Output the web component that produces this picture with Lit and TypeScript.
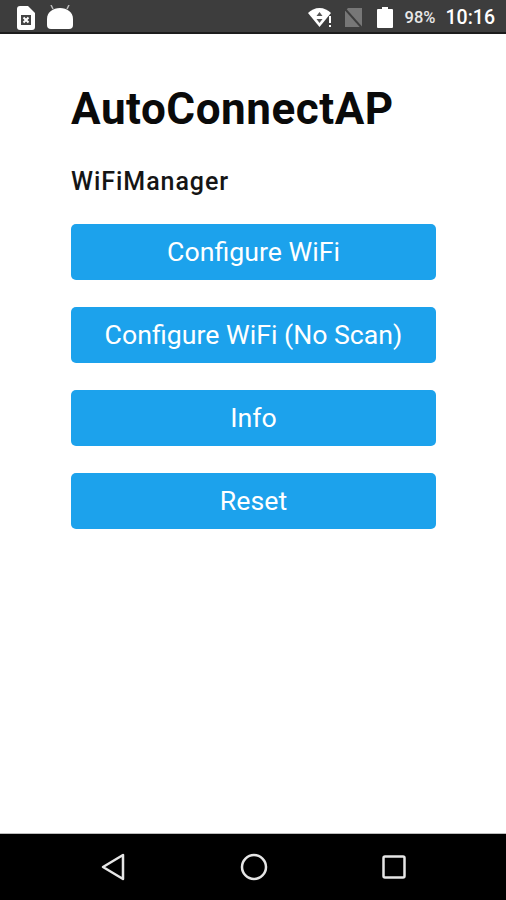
import { LitElement, html, css } from 'lit';
import { customElement } from 'lit/decorators.js';

const labels = ['Configure WiFi', 'Configure WiFi (No Scan)', 'Info', 'Reset'];

@customElement('app-root')
export class AppRoot extends LitElement {
  static styles = css`
    :host {
      display: flex;
      flex-direction: column;
      height: 900px;
      width: 506px;
      background: #fff;
      font-family: Roboto, 'Liberation Sans', sans-serif;
      overflow: hidden;
    }
    .status {
      box-sizing: border-box;
      height: 34px;
      background: #3d3d3d;
      border-bottom: 2px solid #1c1c1c;
      display: flex;
      align-items: center;
      padding: 3px 11px 0 17px;
      color: #fff;
    }
    .status svg { display: block; flex: none; }
    .left { display: flex; align-items: center; gap: 12px; }
    .right { display: flex; align-items: center; margin-left: auto; }
    .pct { font-size: 16.500px; font-weight: 500; margin-left: 12px; color: #e8e8e8; }
    .time { font-size: 19.500px; font-weight: 500; margin-left: 10px; }
    .sim { margin-left: 12px; }
    .batt { margin-left: 15px; }
    main {
      flex: 1;
      padding: 50px 70px 0 71px;
    }
    h1 {
      margin: 0;
      font-size: 44px;
      line-height: 50px;
      font-weight: 700;
      letter-spacing: 0.55px;
      color: #0a0a0a;
    }
    h2 {
      margin: 34px 0 0;
      font-size: 25px;
      line-height: 28px;
      font-weight: 500;
      letter-spacing: 0.95px;
      color: #151515;
    }
    .buttons {
      display: flex;
      flex-direction: column;
      gap: 27px;
      margin-top: 28px;
    }
    .btn {
      height: 56px;
      border: 0;
      border-radius: 5px;
      background: #1ca2ec;
      color: #fff;
      font: 400 26.700px Roboto, 'Liberation Sans', sans-serif;
      padding: 0 0 1px;
    }
    .nav {
      height: 67px;
      background: #000;
      border-top: 1px solid #bdbdbd;
      box-sizing: border-box;
      display: flex;
      align-items: center;
      justify-content: space-between;
      padding: 0 100px 0 100px;
    }
  `;

  render() {
    return html`
      <div class="status">
        <div class="left">
          <svg width="18" height="24" viewBox="0 0 18 24">
            <path d="M3 0h8l7 7v14a3 3 0 0 1-3 3H3a3 3 0 0 1-3-3V3a3 3 0 0 1 3-3z" fill="#fff"/>
            <rect x="4" y="9" width="10" height="10" fill="#444"/>
            <path d="M6.500 11.500l5 5M11.500 11.500l-5 5" stroke="#fff" stroke-width="2"/>
          </svg>
          <svg width="26" height="25" viewBox="0 0 26 25">
            <path d="M0 20v-6C0 7 6 3 13 3s13 4 13 11v6a4 4 0 0 1-4 4H4a4 4 0 0 1-4-4z" fill="#fff"/>
            <path d="M6 4L4 0M20 4l2-4" stroke="#bbb" stroke-width="1.500"/>
          </svg>
        </div>
        <div class="right">
          <svg width="25" height="20" viewBox="0 0 25 20">
            <path d="M0 5C3 2 7 0 11.500 0S20 2 23 5L11.500 19z" fill="#fff"/>
            <path d="M11.500 4l3 4h-6zM11.500 15l3-4h-6z" fill="#555"/>
            <path d="M21 8h2v7h-2zM21 17h2v2h-2z" fill="#fff"/>
          </svg>
          <svg class="sim" width="17" height="19" viewBox="0 0 17 19">
            <path d="M3 0h14v19H0V3z" fill="#777"/>
            <path d="M0 1l17 19" stroke="#3d3d3d" stroke-width="2"/>
          </svg>
          <svg class="batt" width="16" height="21" viewBox="0 0 16 21">
            <path d="M5 2V0h6v2h4a1 1 0 0 1 1 1v17a1 1 0 0 1-1 1H1a1 1 0 0 1-1-1V3a1 1 0 0 1 1-1z" fill="#fff"/>
          </svg>
          <span class="pct">98%</span>
          <span class="time">10:16</span>
        </div>
      </div>
      <main>
        <h1>AutoConnectAP</h1>
        <h2>WiFiManager</h2>
        <div class="buttons">
          ${labels.map((l) => html`<button class="btn">${l}</button>`)}
        </div>
      </main>
      <div class="nav">
        <svg width="26" height="28" viewBox="0 0 26 28">
          <path d="M23 2v24L3 14z" fill="none" stroke="#e6e6e6" stroke-width="2.500" stroke-linejoin="round"/>
        </svg>
        <svg width="28" height="28" viewBox="0 0 28 28">
          <circle cx="14" cy="14" r="12" fill="none" stroke="#e6e6e6" stroke-width="2.500"/>
        </svg>
        <svg width="24" height="24" viewBox="0 0 24 24">
          <rect x="1.500" y="1.500" width="21" height="21" rx="1.500" fill="none" stroke="#e6e6e6" stroke-width="2.500"/>
        </svg>
      </div>
    `;
  }
}
